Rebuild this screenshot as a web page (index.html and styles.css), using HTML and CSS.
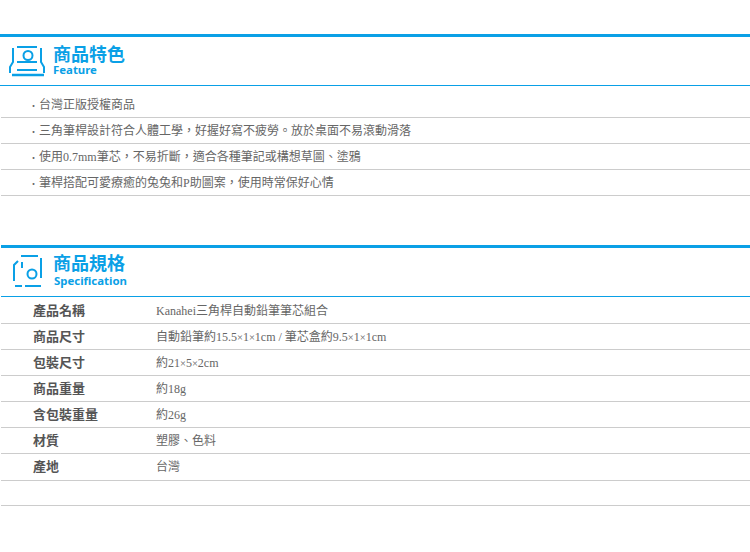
FILE: index.html
```html
<!DOCTYPE html>
<html lang="zh-Hant">
<head>
<meta charset="utf-8">
<title>商品特色</title>
<link rel="stylesheet" href="styles.css">
</head>
<body>
<section class="section section-feature">
  <header class="head">
    <svg class="icon" width="38" height="34" viewBox="0 0 38 34" fill="none" stroke="#0aa0e6" stroke-width="2">
      <path d="M8 3H28"/>
      <path d="M4 4V18L1 23V29"/>
      <path d="M32 4V18L35 23V29"/>
      <circle cx="19" cy="11.5" r="4.5"/>
      <path d="M8 18H28"/>
      <path d="M8 26H28"/>
      <path d="M3 31H35" stroke-width="2.5"/>
    </svg>
    <div class="titles">
      <h2 class="title">商品特色</h2>
      <div class="subtitle">Feature</div>
    </div>
  </header>
  <ul class="list">
    <li>台灣正版授權商品</li>
    <li>三角筆桿設計符合人體工學，好握好寫不疲勞。放於桌面不易滾動滑落</li>
    <li>使用0.7mm筆芯，不易折斷，適合各種筆記或構想草圖、塗鴉</li>
    <li>筆桿搭配可愛療癒的兔兔和P助圖案，使用時常保好心情</li>
  </ul>
</section>
<section class="section section-spec">
  <header class="head">
    <svg class="icon" width="38" height="34" viewBox="0 0 38 34" fill="none" stroke="#0aa0e6" stroke-width="2">
      <path d="M11 2H28"/>
      <path d="M31 4V24"/>
      <path d="M4 27V11L8 7"/>
      <path d="M12 8V14"/>
      <circle cx="22" cy="20" r="4.5"/>
      <path d="M5 32H12"/>
      <path d="M15 32H31"/>
    </svg>
    <div class="titles">
      <h2 class="title">商品規格</h2>
      <div class="subtitle">Specification</div>
    </div>
  </header>
  <dl class="specs">
    <div class="row row-first"><dt>產品名稱</dt><dd>Kanahei三角桿自動鉛筆筆芯組合</dd></div>
    <div class="row"><dt>商品尺寸</dt><dd>自動鉛筆約15.5<span class="times">×</span>1<span class="times">×</span>1cm / 筆芯盒約9.5<span class="times">×</span>1<span class="times">×</span>1cm</dd></div>
    <div class="row"><dt>包裝尺寸</dt><dd>約21<span class="times">×</span>5<span class="times">×</span>2cm</dd></div>
    <div class="row"><dt>商品重量</dt><dd>約18g</dd></div>
    <div class="row"><dt>含包裝重量</dt><dd>約26g</dd></div>
    <div class="row"><dt>材質</dt><dd>塑膠、色料</dd></div>
    <div class="row row-tall"><dt>產地</dt><dd>台灣</dd></div>
    <div class="row row-empty"></div>
  </dl>
</section>
```

FILE: styles.css
```css
* { box-sizing: border-box; }
html, body { margin: 0; padding: 0; background: #fff; }
body {
  height: 552px;
  overflow: hidden;
  font-family: "Liberation Serif", "Noto Sans CJK TC", serif;
  font-size: 12px;
  color: #666;
}
.section-feature { padding-top: 34px; }
.section-spec { padding: 49px 0 0 1px; }
.head {
  display: flex;
  align-items: flex-start;
  height: 52px;
  border-top: 3px solid #0aa0e6;
  border-bottom: 1px solid #0aa0e6;
}
.icon { flex: none; margin: 7px 0 0 9px; }
.section-spec .icon { margin: 6px 0 0 9px; }
.titles { margin-left: 6px; padding-top: 6px; }
.section-spec .titles { margin-left: 5px; padding-top: 4px; }
.title {
  margin: 0;
  font-family: "Noto Sans CJK TC", sans-serif;
  font-size: 18px;
  font-weight: 700;
  line-height: 20px;
  color: #0aa0e6;
}
.subtitle {
  font-family: "Noto Sans", sans-serif;
  font-size: 11.4px;
  font-weight: 700;
  line-height: 13px;
  color: #0aa0e6;
}
.section-spec .subtitle { margin: 2px 0 0 1px; }
.list { margin: 0; padding: 0 0 0 1px; list-style: none; }
.list li {
  height: 26px;
  padding: 1px 0 0 29px;
  line-height: 25px;
  border-bottom: 1px solid #ccc;
}
.list li:first-child { height: 32px; padding-top: 7px; }
.list li::before { content: "・"; display: inline-block; width: 9px; margin-left: -1px; margin-right: 1px; font-size: 9px; }
.specs { margin: 0; }
.row {
  display: flex;
  height: 26px;
  line-height: 25px;
  border-bottom: 1px solid #ccc;
}
.row-first { height: 27px; padding-top: 1px; }
.row-tall { height: 27px; }
.row-empty { height: 25px; }
.row dt { width: 155px; padding-left: 32px; font-size: 13px; font-weight: 700; color: #555; }
.row dd { margin: 0; padding-top: 1px; }
.times { font-size: 10.5px; }
```
